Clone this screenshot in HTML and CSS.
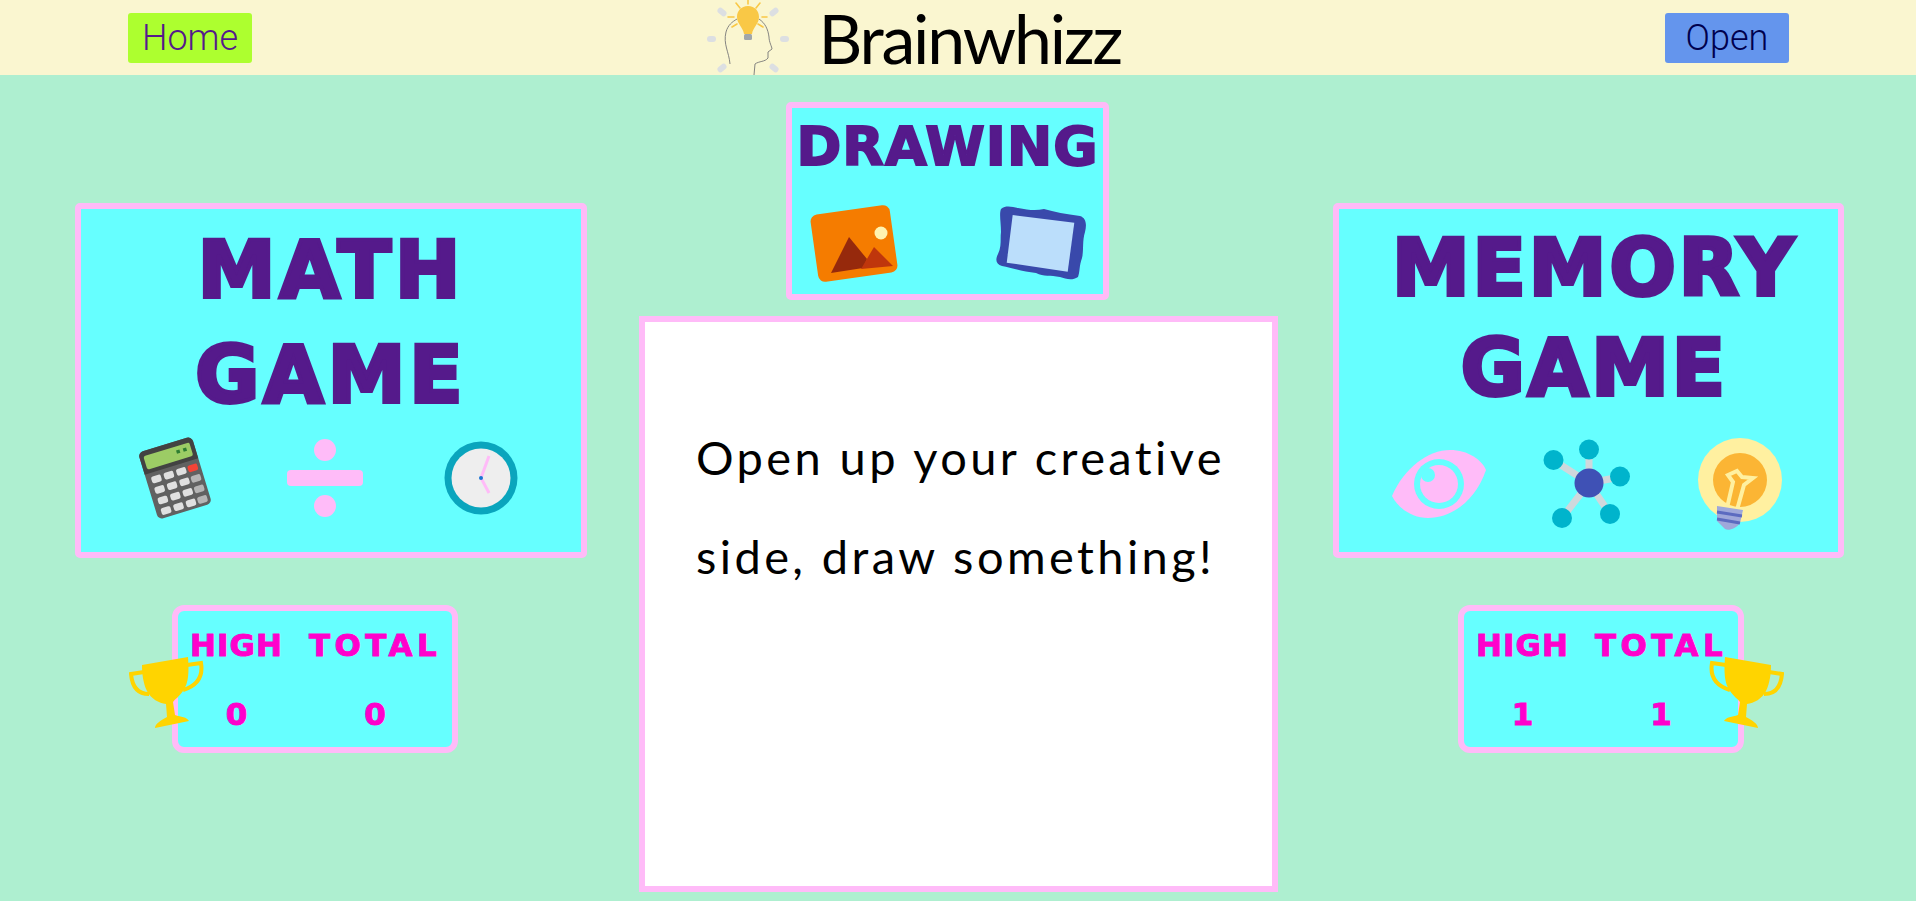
FILE: index.html
```html
<!DOCTYPE html>
<html lang="en">
<head>
    <meta charset="UTF-8">
    <meta name="viewport" content="width=device-width, initial-scale=1.0">
    <title>Brainwhizz</title>
    <link rel="stylesheet" href="styles.css">
</head>
<body>

    <header class="topbar">
        <a class="nav-btn home-btn" href="#">Home</a>
        <div class="brand">
            <svg class="logo" viewBox="5 0 90 75" width="90" height="75">
                <g fill="#dcdfe2">
                    <rect x="18" y="9" width="10" height="6" rx="3" transform="rotate(40 23 12)"/>
                    <rect x="70" y="9" width="10" height="6" rx="3" transform="rotate(-40 75 12)"/>
                    <rect x="8" y="36" width="9" height="6" rx="3"/>
                    <rect x="81" y="36" width="9" height="6" rx="3"/>
                    <rect x="18" y="65" width="10" height="6" rx="3" transform="rotate(-40 23 68)"/>
                    <rect x="70" y="65" width="10" height="6" rx="3" transform="rotate(40 75 68)"/>
                </g>
                <g fill="none" stroke="#777" stroke-width="0.9">
                    <path d="M31 64C30 52 24 44 27 32C29 25 33 22 38 19"/>
                    <path d="M60 19C66 23 69 29 70 37C70 42 73 47 73 49L69 52L69 58C66 62 60 61 56 64L55 75"/>
                </g>
                <g stroke="#f9c846" stroke-width="1.6" stroke-linecap="round">
                    <path d="M49 0V4M37 3L41 8M61 3L57 8M29 17H35M63 17H68M33 27L38 24M64 27L59 24"/>
                </g>
                <path d="M49 6C56 6 60 11 60 17C60 24 54 27 53 34H45C44 27 38 24 38 17C38 11 42 6 49 6Z" fill="#f9c846"/>
                <rect x="45" y="34" width="8" height="6" rx="1.5" fill="#a0a6ab"/>
            </svg>
            <h1 class="brand-name">Brainwhizz</h1>
        </div>
        <a class="nav-btn open-btn" href="#">Open</a>
    </header>

    <main class="game-board">

        <section class="side-col">
            <div class="game-card math-card">
                <h2 class="game-title">MATH<br>GAME</h2>
                <div class="icon-row math-icons">
                    <svg viewBox="-37 -42 74 84" width="74" height="84">
                        <g transform="rotate(-17)">
                            <rect x="-28" y="-35" width="56" height="70" rx="5" fill="#616161"/>
                            <path d="M-28 -30a5 5 0 0 1 5 -5h46a5 5 0 0 1 5 5v18h-56z" fill="#424242"/>
                            <rect x="-24" y="-30" width="48" height="14" rx="2" fill="#9ccc65"/>
                            <rect x="9" y="-26" width="3.5" height="3.5" fill="#2e7d32"/>
                            <rect x="16" y="-26" width="3.5" height="3.5" fill="#2e7d32"/>
                            <g fill="#e0e0e0">
                                <rect x="-23" y="-8" width="10" height="7" rx="2"/>
                                <rect x="-10" y="-8" width="10" height="7" rx="2"/>
                                <rect x="3" y="-8" width="10" height="7" rx="2"/>
                                <rect x="-23" y="3" width="10" height="7" rx="2"/>
                                <rect x="-10" y="3" width="10" height="7" rx="2"/>
                                <rect x="3" y="3" width="10" height="7" rx="2"/>
                                <rect x="-23" y="14" width="10" height="7" rx="2"/>
                                <rect x="-10" y="14" width="10" height="7" rx="2"/>
                                <rect x="3" y="14" width="10" height="7" rx="2"/>
                                <rect x="-23" y="25" width="10" height="7" rx="2"/>
                                <rect x="-10" y="25" width="10" height="7" rx="2"/>
                                <rect x="3" y="25" width="10" height="7" rx="2"/>
                            </g>
                            <rect x="15" y="-8" width="10" height="7" rx="2" fill="#f44336"/>
                            <g fill="#b5b5b5">
                                <rect x="15" y="3" width="10" height="7" rx="2"/>
                                <rect x="15" y="14" width="10" height="7" rx="2"/>
                                <rect x="15" y="25" width="10" height="7" rx="2"/>
                            </g>
                        </g>
                    </svg>
                    <svg viewBox="0 0 76 78" width="76" height="78">
                        <g fill="#ffbbf8">
                            <circle cx="38" cy="11" r="11"/>
                            <rect x="0" y="31" width="76" height="16" rx="4"/>
                            <circle cx="38" cy="67" r="11"/>
                        </g>
                    </svg>
                    <svg class="clock-icon" viewBox="-37 -37 74 74" width="74" height="74">
                        <circle r="36.5" fill="#0aa5bd"/>
                        <circle r="29.5" fill="#eeeeee"/>
                        <path d="M8 -22L0 0L8 15" fill="none" stroke="#ffbbf8" stroke-width="3"/>
                        <circle r="2" fill="#1976d2"/>
                    </svg>
                </div>
            </div>
            <div class="score-box math-score">
                <span class="score-label">HIGH</span>
                <span class="score-label">TOTAL</span>
                <span class="score-value">0</span>
                <span class="score-value">0</span>
                <svg class="trophy" viewBox="0 0 75 71" width="75" height="71">
                    <path d="M13 8L59 0C60 14 60 26 54 34C50 40 46 42 44 45L46 58C52 60 58 60 60 64L26 71C26 67 32 63 38 60L37 47C30 46 22 42 18 34C14 26 13 16 13 8Z" fill="#ffd400"/>
                    <path d="M15 15L2 17C3 28 7 37 20 37M58 8L72 6C74 18 70 28 54 33" fill="none" stroke="#ffd400" stroke-width="4"/>
                </svg>
            </div>
        </section>

        <section class="center-col">
            <div class="game-card drawing-card">
                <h2 class="drawing-title">DRAWING</h2>
                <div class="icon-row drawing-icons">
                    <svg viewBox="0 0 90 79" width="90" height="79">
                        <rect x="5" y="5.500" width="80" height="68" rx="7" fill="#f57c00" transform="rotate(-8 45 39.500)"/>
                        <circle cx="72" cy="29" r="6.500" fill="#fff3b0"/>
                        <polygon points="22,69 40,33 58,55 54,64" fill="#96290c"/>
                        <polygon points="52,65 65,43 84,62" fill="#bf360c"/>
                    </svg>
                    <svg viewBox="-1 0 92 75" width="92" height="75">
                        <path d="M5 3C10 -1 16 1 22 2C32 4 40 5 48 3C58 6 70 8 84 10C90 12 91 18 89 26C86 36 88 44 86 52C83 60 84 66 82 71C76 75 70 73 64 71C54 69 48 71 40 67C28 66 16 62 6 60C0 58 -1 54 2 48C6 40 4 32 5 26C5 16 3 8 5 3Z" fill="#3949ab"/>
                        <polygon points="16.700,9 78.300,16.700 71.700,65.700 10.700,56.700" fill="#bbdefb"/>
                    </svg>
                </div>
            </div>
            <div class="draw-canvas">
                <p class="draw-prompt">Open up your creative<br>side, draw something!</p>
            </div>
        </section>

        <section class="side-col">
            <div class="game-card memory-card">
                <h2 class="game-title">MEMORY<br>GAME</h2>
                <div class="icon-row memory-icons">
                    <svg viewBox="0 0 94 68" width="94" height="68">
                        <path d="M0 46C12 18 36 0 58 0C76 0 90 10 94 20C84 50 60 68 36 68C20 68 6 58 0 46Z" fill="#ffbbf8"/>
                        <circle cx="47" cy="34" r="25" fill="#66ffff"/>
                        <circle cx="47" cy="34" r="19" fill="#ffbbf8"/>
                        <circle cx="36" cy="25" r="7" fill="#66ffff"/>
                    </svg>
                    <svg viewBox="0 0 88 90" width="88" height="90">
                        <path d="M46 44V10M46 44L10 21M46 44L77 38M46 44L19 79M46 44L67 75" stroke="#cfd8dc" stroke-width="7"/>
                        <g fill="#00b4cc">
                            <circle cx="46" cy="10.500" r="10"/>
                            <circle cx="10.500" cy="21" r="10"/>
                            <circle cx="77" cy="37.500" r="10"/>
                            <circle cx="19" cy="79" r="10"/>
                            <circle cx="67" cy="75" r="10"/>
                        </g>
                        <circle cx="46" cy="44" r="14.500" fill="#3f51b5"/>
                    </svg>
                    <svg class="bulb-icon" viewBox="0 0 84 92" width="84" height="92">
                        <circle cx="42" cy="42" r="42" fill="#fff0a0"/>
                        <circle cx="42" cy="42" r="27" fill="#fbb534"/>
                        <path d="M29 70L35 44L30 37L39 33L44 39L55 40L46 47L39 72" fill="none" stroke="#fff0a0" stroke-width="4"/>
                        <path d="M19 68L45 72L42 85C38 91 30 93 27 91L19 83Z" fill="#9fa8da"/>
                        <path d="M19 74L44 78M19 81L42 85" stroke="#5c6bc0" stroke-width="3"/>
                    </svg>
                </div>
            </div>
            <div class="score-box memory-score">
                <span class="score-label">HIGH</span>
                <span class="score-label">TOTAL</span>
                <span class="score-value">1</span>
                <span class="score-value">1</span>
                <svg class="trophy" viewBox="0 0 75 71" width="75" height="71">
                    <path d="M13 8L59 0C60 14 60 26 54 34C50 40 46 42 44 45L46 58C52 60 58 60 60 64L26 71C26 67 32 63 38 60L37 47C30 46 22 42 18 34C14 26 13 16 13 8Z" fill="#ffd400"/>
                    <path d="M15 15L2 17C3 28 7 37 20 37M58 8L72 6C74 18 70 28 54 33" fill="none" stroke="#ffd400" stroke-width="4"/>
                </svg>
            </div>
        </section>

    </main>

</body>
</html>
```

FILE: styles.css
```css
body {
    margin: 0;
    background-color: #aeefd0;
    font-family: "DejaVu Sans", sans-serif;
    overflow: hidden;
}

/* barra superior */
.topbar {
    display: flex;
    justify-content: space-between;
    align-items: center;
    height: 75px;
    padding: 0 127px 0 128px;
    background-color: #faf6d0;
}

.nav-btn {
    display: flex;
    justify-content: center;
    align-items: center;
    width: 124px;
    height: 50px;
    border-radius: 3px;
    font-family: Roboto, sans-serif;
    font-size: 36px;
    font-weight: 300;
    text-decoration: none;
}

.home-btn {
    background-color: #adff2f;
    color: #551a8b;
}

.open-btn {
    background-color: #6495ed;
    color: #00004d;
}

.brand {
    display: flex;
    align-items: center;
    margin-right: 96px;
}

.logo {
    display: block;
}

.brand-name {
    margin: 0 0 0 25px;
    width: 299px;
    font-family: Lato, sans-serif;
    font-size: 68px;
    font-weight: 400;
    line-height: 75px;
    letter-spacing: -2.2px;
    white-space: nowrap;
    color: black;
}

/* columnas */
.game-board {
    display: grid;
    grid-template-columns: 512px 639px 514px;
    column-gap: 52px;
    padding-left: 75px;
}

.side-col {
    padding-top: 128px;
}

.center-col {
    padding-top: 27px;
}

.center-col + .side-col {
    margin-left: 3px;
}

.game-card {
    box-sizing: border-box;
    border: 6px solid #ffbbf8;
    border-radius: 5px;
    background-color: #66ffff;
}

.math-card,
.memory-card {
    height: 355px;
}

.game-title {
    height: 210px;
    margin: 0;
    padding-top: 9px;
    font-size: 78px;
    font-weight: 700;
    letter-spacing: 4px;
    text-align: center;
    color: #551a8b;
    -webkit-text-stroke: 4px #551a8b;
}

.math-card .game-title {
    line-height: 105px;
}

.memory-card .game-title {
    padding-left: 12px;
    line-height: 100px;
    letter-spacing: 3px;
}

.icon-row {
    display: flex;
    align-items: center;
}

.math-icons {
    gap: 75px;
    height: 100px;
    padding-left: 57px;
}

.clock-icon {
    margin-left: 6px;
}

.memory-icons {
    gap: 57px;
    height: 100px;
    margin-top: 6px;
    padding-left: 53px;
}

.bulb-icon {
    margin-left: 10px;
}

.drawing-card {
    width: 323px;
    height: 198px;
    margin: 0 0 16px 147px;
}

.drawing-title {
    margin: 0;
    padding-top: 15px;
    font-size: 54px;
    line-height: 48px;
    letter-spacing: 1px;
    text-align: center;
    color: #551a8b;
    -webkit-text-stroke: 2px #551a8b;
}

.drawing-icons {
    justify-content: space-between;
    height: 90px;
    margin-top: 27px;
    padding: 0 16px 0 17px;
}

.draw-canvas {
    box-sizing: border-box;
    height: 576px;
    padding-top: 86px;
    border: 6px solid #ffbbf8;
    background-color: white;
}

.draw-prompt {
    margin: 0 0 0 51px;
    font-family: Lato, sans-serif;
    font-size: 47px;
    line-height: 99px;
    letter-spacing: 3.4px;
    color: black;
}

/* puntajes */
.score-box {
    position: relative;
    box-sizing: border-box;
    display: grid;
    grid-template-columns: auto auto;
    justify-content: start;
    column-gap: 26px;
    width: 286px;
    height: 148px;
    margin-top: 47px;
    padding-left: 12px;
    border: 6px solid #ffbbf8;
    border-radius: 12px;
    background-color: #66ffff;
}

.math-score {
    margin-left: 97px;
}

.memory-score {
    margin-left: 125px;
}

.score-label,
.score-value {
    font-size: 31px;
    font-weight: 700;
    line-height: 69px;
    text-align: center;
    color: #ff00cc;
    -webkit-text-stroke: 1px #ff00cc;
}

.score-label:nth-child(1) {
    letter-spacing: 1px;
}

.score-label:nth-child(2) {
    letter-spacing: 4.5px;
}

.trophy {
    position: absolute;
    top: 46px;
}

.math-score .trophy {
    left: -49px;
}

.memory-score .trophy {
    right: -46px;
    transform: scaleX(-1);
}
```
